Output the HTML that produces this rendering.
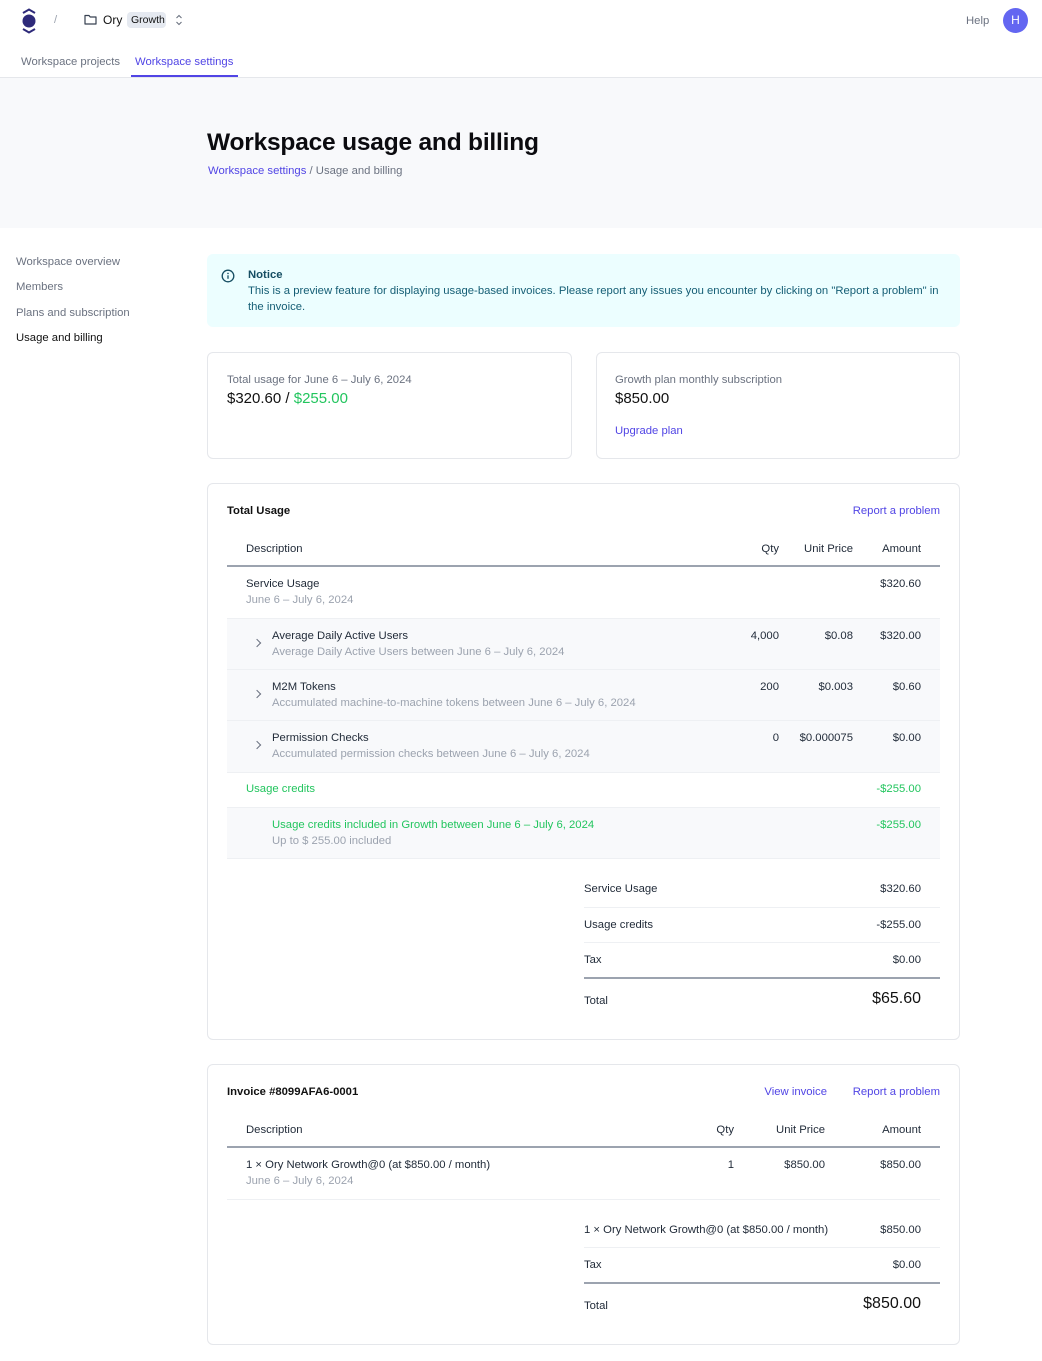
<!DOCTYPE html>
<html><head><meta charset="utf-8">
<style>
*{margin:0;padding:0;box-sizing:border-box}
body{width:1042px;height:1361px;position:relative;background:#fff;font-family:"Liberation Sans",Arial,sans-serif;font-size:11.3px;color:#1f2937;overflow:hidden}
.t{position:absolute;white-space:nowrap;line-height:16px}
.r{text-align:right}
.g{color:#6b7280}
.l{color:#9ca3af}
.p{color:#5145e5}
.gr{color:#22c55e}
.b{font-weight:bold}
.box{position:absolute;border:1px solid #e5e7eb;border-radius:6px;background:#fff}
.bg{position:absolute;background:#f8f9fb}
.hl{position:absolute;height:1px;background:#eef0f3}
.dl{position:absolute;height:2px;background:#9ca3af}
.chev{position:absolute;width:6px;height:6px;border-right:1.3px solid #6b7280;border-top:1.3px solid #6b7280;transform:rotate(45deg)}
</style></head><body>
<svg style="position:absolute;left:20px;top:8px" width="18" height="26" viewBox="0 0 18 26">
<path d="M3 5 L9 1.5 L15 5" fill="none" stroke="#2e2a7a" stroke-width="2"/>
<circle cx="9" cy="13" r="6.5" fill="#2e2a7a"/>
<path d="M3 21 L9 24.5 L15 21" fill="none" stroke="#2e2a7a" stroke-width="2"/>
</svg>
<div class="t l" style="left:54px;top:12px">/</div>
<svg style="position:absolute;left:84px;top:14px" width="13" height="11" viewBox="0 0 13 11"><path d="M1 1.5h4l1.2 1.5H12v7H1z" fill="none" stroke="#374151" stroke-width="1.2" stroke-linejoin="round"/></svg>
<div class="t" style="left:103px;top:12px;color:#111;font-size:12px">Ory</div>
<div class="t" style="left:127px;top:12px;background:#e5e9f0;border-radius:4px;padding:0 4px;font-size:10.5px;color:#111;width:39px">Growth</div>
<svg style="position:absolute;left:175px;top:14px" width="8" height="12" viewBox="0 0 8 12"><path d="M1.5 4L4 1.5 6.5 4M1.5 8L4 10.5 6.5 8" fill="none" stroke="#6b7280" stroke-width="1.1"/></svg>
<div class="t g" style="left:966px;top:13px">Help</div>
<div style="position:absolute;left:1003px;top:8px;width:25px;height:25px;border-radius:50%;background:#6366f1;color:#fff;font-size:12px;line-height:25px;text-align:center">H</div>
<div class="t g" style="left:21px;top:54px">Workspace projects</div>
<div class="t p" style="left:135px;top:54px">Workspace settings</div>
<div style="position:absolute;left:131px;top:75px;width:107px;height:2px;background:#5145e5"></div>
<div style="position:absolute;left:0;top:77px;width:1042px;height:1px;background:#e5e7eb"></div>
<div style="position:absolute;left:0;top:78px;width:1042px;height:150px;background:#f8f9fb"></div>
<div class="t" style="left:207px;top:128px;font-size:24.5px;line-height:30px;font-weight:bold;color:#0b0b0f;letter-spacing:-0.2px">Workspace usage and billing</div>
<div class="t" style="left:208px;top:163px"><span class="p">Workspace settings</span> <span class="g">/ Usage and billing</span></div>
<div class="t g" style="left:16px;top:254px">Workspace overview</div>
<div class="t g" style="left:16px;top:279px">Members</div>
<div class="t g" style="left:16px;top:305px">Plans and subscription</div>
<div class="t" style="left:16px;top:330px;color:#111">Usage and billing</div>
<div style="position:absolute;left:207px;top:254px;width:753px;height:73px;background:#ecfeff;border-radius:6px"></div>
<svg style="position:absolute;left:221px;top:269px" width="14" height="14" viewBox="0 0 14 14"><circle cx="7" cy="7" r="5.8" fill="none" stroke="#164e63" stroke-width="1.3"/><path d="M7 6.3v3.5" stroke="#164e63" stroke-width="1.3"/><circle cx="7" cy="4.4" r=".8" fill="#164e63"/></svg>
<div class="t b" style="left:248px;top:267px;color:#164e63">Notice</div>
<div class="t" style="left:248px;top:283px;color:#155e75">This is a preview feature for displaying usage-based invoices. Please report any issues you encounter by clicking on "Report a problem" in</div>
<div class="t" style="left:248px;top:299px;color:#155e75">the invoice.</div>
<div class="box" style="left:207px;top:352px;width:365px;height:107px"></div>
<div class="t g" style="left:227px;top:372px">Total usage for June 6 – July 6, 2024</div>
<div class="t" style="left:227px;top:390px;font-size:15px;line-height:18px;color:#111">$320.60 / <span class="gr">$255.00</span></div>
<div class="box" style="left:596px;top:352px;width:364px;height:107px"></div>
<div class="t g" style="left:615px;top:372px">Growth plan monthly subscription</div>
<div class="t" style="left:615px;top:390px;font-size:15px;line-height:18px;color:#111">$850.00</div>
<div class="t p" style="left:615px;top:423px">Upgrade plan</div>
<div class="box" style="left:207px;top:483px;width:753px;height:557px"></div>
<div class="t b" style="left:227px;top:503px;color:#111">Total Usage</div>
<div class="t p r" style="right:102px;top:503px">Report a problem</div>
<div class="t" style="left:246px;top:541px">Description</div>
<div class="t r" style="right:263px;top:541px">Qty</div>
<div class="t r" style="right:189px;top:541px">Unit Price</div>
<div class="t r" style="right:121px;top:541px">Amount</div>
<div class="dl" style="left:227px;top:565px;width:713px"></div>
<div class="t" style="left:246px;top:576px">Service Usage</div>
<div class="t l" style="left:246px;top:592px">June 6 – July 6, 2024</div>
<div class="t r" style="right:121px;top:576px">$320.60</div>
<div class="bg" style="left:227px;top:618px;width:713px;height:154px"></div>
<div class="hl" style="left:227px;top:618px;width:713px"></div>
<div class="hl" style="left:227px;top:669px;width:713px"></div>
<div class="hl" style="left:227px;top:720px;width:713px"></div>
<div class="hl" style="left:227px;top:772px;width:713px"></div>
<div class="chev" style="left:254px;top:640px"></div>
<div class="t" style="left:272px;top:628px">Average Daily Active Users</div>
<div class="t l" style="left:272px;top:644px">Average Daily Active Users between June 6 – July 6, 2024</div>
<div class="t r" style="right:263px;top:628px">4,000</div><div class="t r" style="right:189px;top:628px">$0.08</div><div class="t r" style="right:121px;top:628px">$320.00</div>
<div class="chev" style="left:254px;top:691px"></div>
<div class="t" style="left:272px;top:679px">M2M Tokens</div>
<div class="t l" style="left:272px;top:695px">Accumulated machine-to-machine tokens between June 6 – July 6, 2024</div>
<div class="t r" style="right:263px;top:679px">200</div><div class="t r" style="right:189px;top:679px">$0.003</div><div class="t r" style="right:121px;top:679px">$0.60</div>
<div class="chev" style="left:254px;top:742px"></div>
<div class="t" style="left:272px;top:730px">Permission Checks</div>
<div class="t l" style="left:272px;top:746px">Accumulated permission checks between June 6 – July 6, 2024</div>
<div class="t r" style="right:263px;top:730px">0</div><div class="t r" style="right:189px;top:730px">$0.000075</div><div class="t r" style="right:121px;top:730px">$0.00</div>
<div class="t gr" style="left:246px;top:781px">Usage credits</div>
<div class="t gr r" style="right:121px;top:781px">-$255.00</div>
<div class="bg" style="left:227px;top:807px;width:713px;height:51px"></div>
<div class="hl" style="left:227px;top:807px;width:713px"></div>
<div class="hl" style="left:227px;top:858px;width:713px"></div>
<div class="t gr" style="left:272px;top:817px">Usage credits included in Growth between June 6 – July 6, 2024</div>
<div class="t l" style="left:272px;top:833px">Up to $ 255.00 included</div>
<div class="t gr r" style="right:121px;top:817px">-$255.00</div>
<div class="t" style="left:584px;top:881px">Service Usage</div><div class="t r" style="right:121px;top:881px">$320.60</div>
<div class="hl" style="left:584px;top:907px;width:356px"></div>
<div class="t" style="left:584px;top:917px">Usage credits</div><div class="t r" style="right:121px;top:917px">-$255.00</div>
<div class="hl" style="left:584px;top:942px;width:356px"></div>
<div class="t" style="left:584px;top:952px">Tax</div><div class="t r" style="right:121px;top:952px">$0.00</div>
<div class="dl" style="left:584px;top:977px;width:356px"></div>
<div class="t" style="left:584px;top:993px">Total</div>
<div class="t r" style="right:121px;top:989px;font-size:16px;line-height:20px;color:#111">$65.60</div>
<div class="box" style="left:207px;top:1064px;width:753px;height:281px"></div>
<div class="t b" style="left:227px;top:1084px;color:#111">Invoice #8099AFA6-0001</div>
<div class="t p r" style="right:215px;top:1084px">View invoice</div>
<div class="t p r" style="right:102px;top:1084px">Report a problem</div>
<div class="t" style="left:246px;top:1122px">Description</div>
<div class="t r" style="right:308px;top:1122px">Qty</div>
<div class="t r" style="right:217px;top:1122px">Unit Price</div>
<div class="t r" style="right:121px;top:1122px">Amount</div>
<div class="dl" style="left:227px;top:1146px;width:713px"></div>
<div class="t" style="left:246px;top:1157px">1 × Ory Network Growth@0 (at $850.00 / month)</div>
<div class="t l" style="left:246px;top:1173px">June 6 – July 6, 2024</div>
<div class="t r" style="right:308px;top:1157px">1</div><div class="t r" style="right:217px;top:1157px">$850.00</div><div class="t r" style="right:121px;top:1157px">$850.00</div>
<div class="hl" style="left:227px;top:1199px;width:713px"></div>
<div class="t" style="left:584px;top:1222px">1 × Ory Network Growth@0 (at $850.00 / month)</div><div class="t r" style="right:121px;top:1222px">$850.00</div>
<div class="hl" style="left:584px;top:1247px;width:356px"></div>
<div class="t" style="left:584px;top:1257px">Tax</div><div class="t r" style="right:121px;top:1257px">$0.00</div>
<div class="dl" style="left:584px;top:1282px;width:356px"></div>
<div class="t" style="left:584px;top:1298px">Total</div>
<div class="t r" style="right:121px;top:1294px;font-size:16px;line-height:20px;color:#111">$850.00</div>
</body></html>
